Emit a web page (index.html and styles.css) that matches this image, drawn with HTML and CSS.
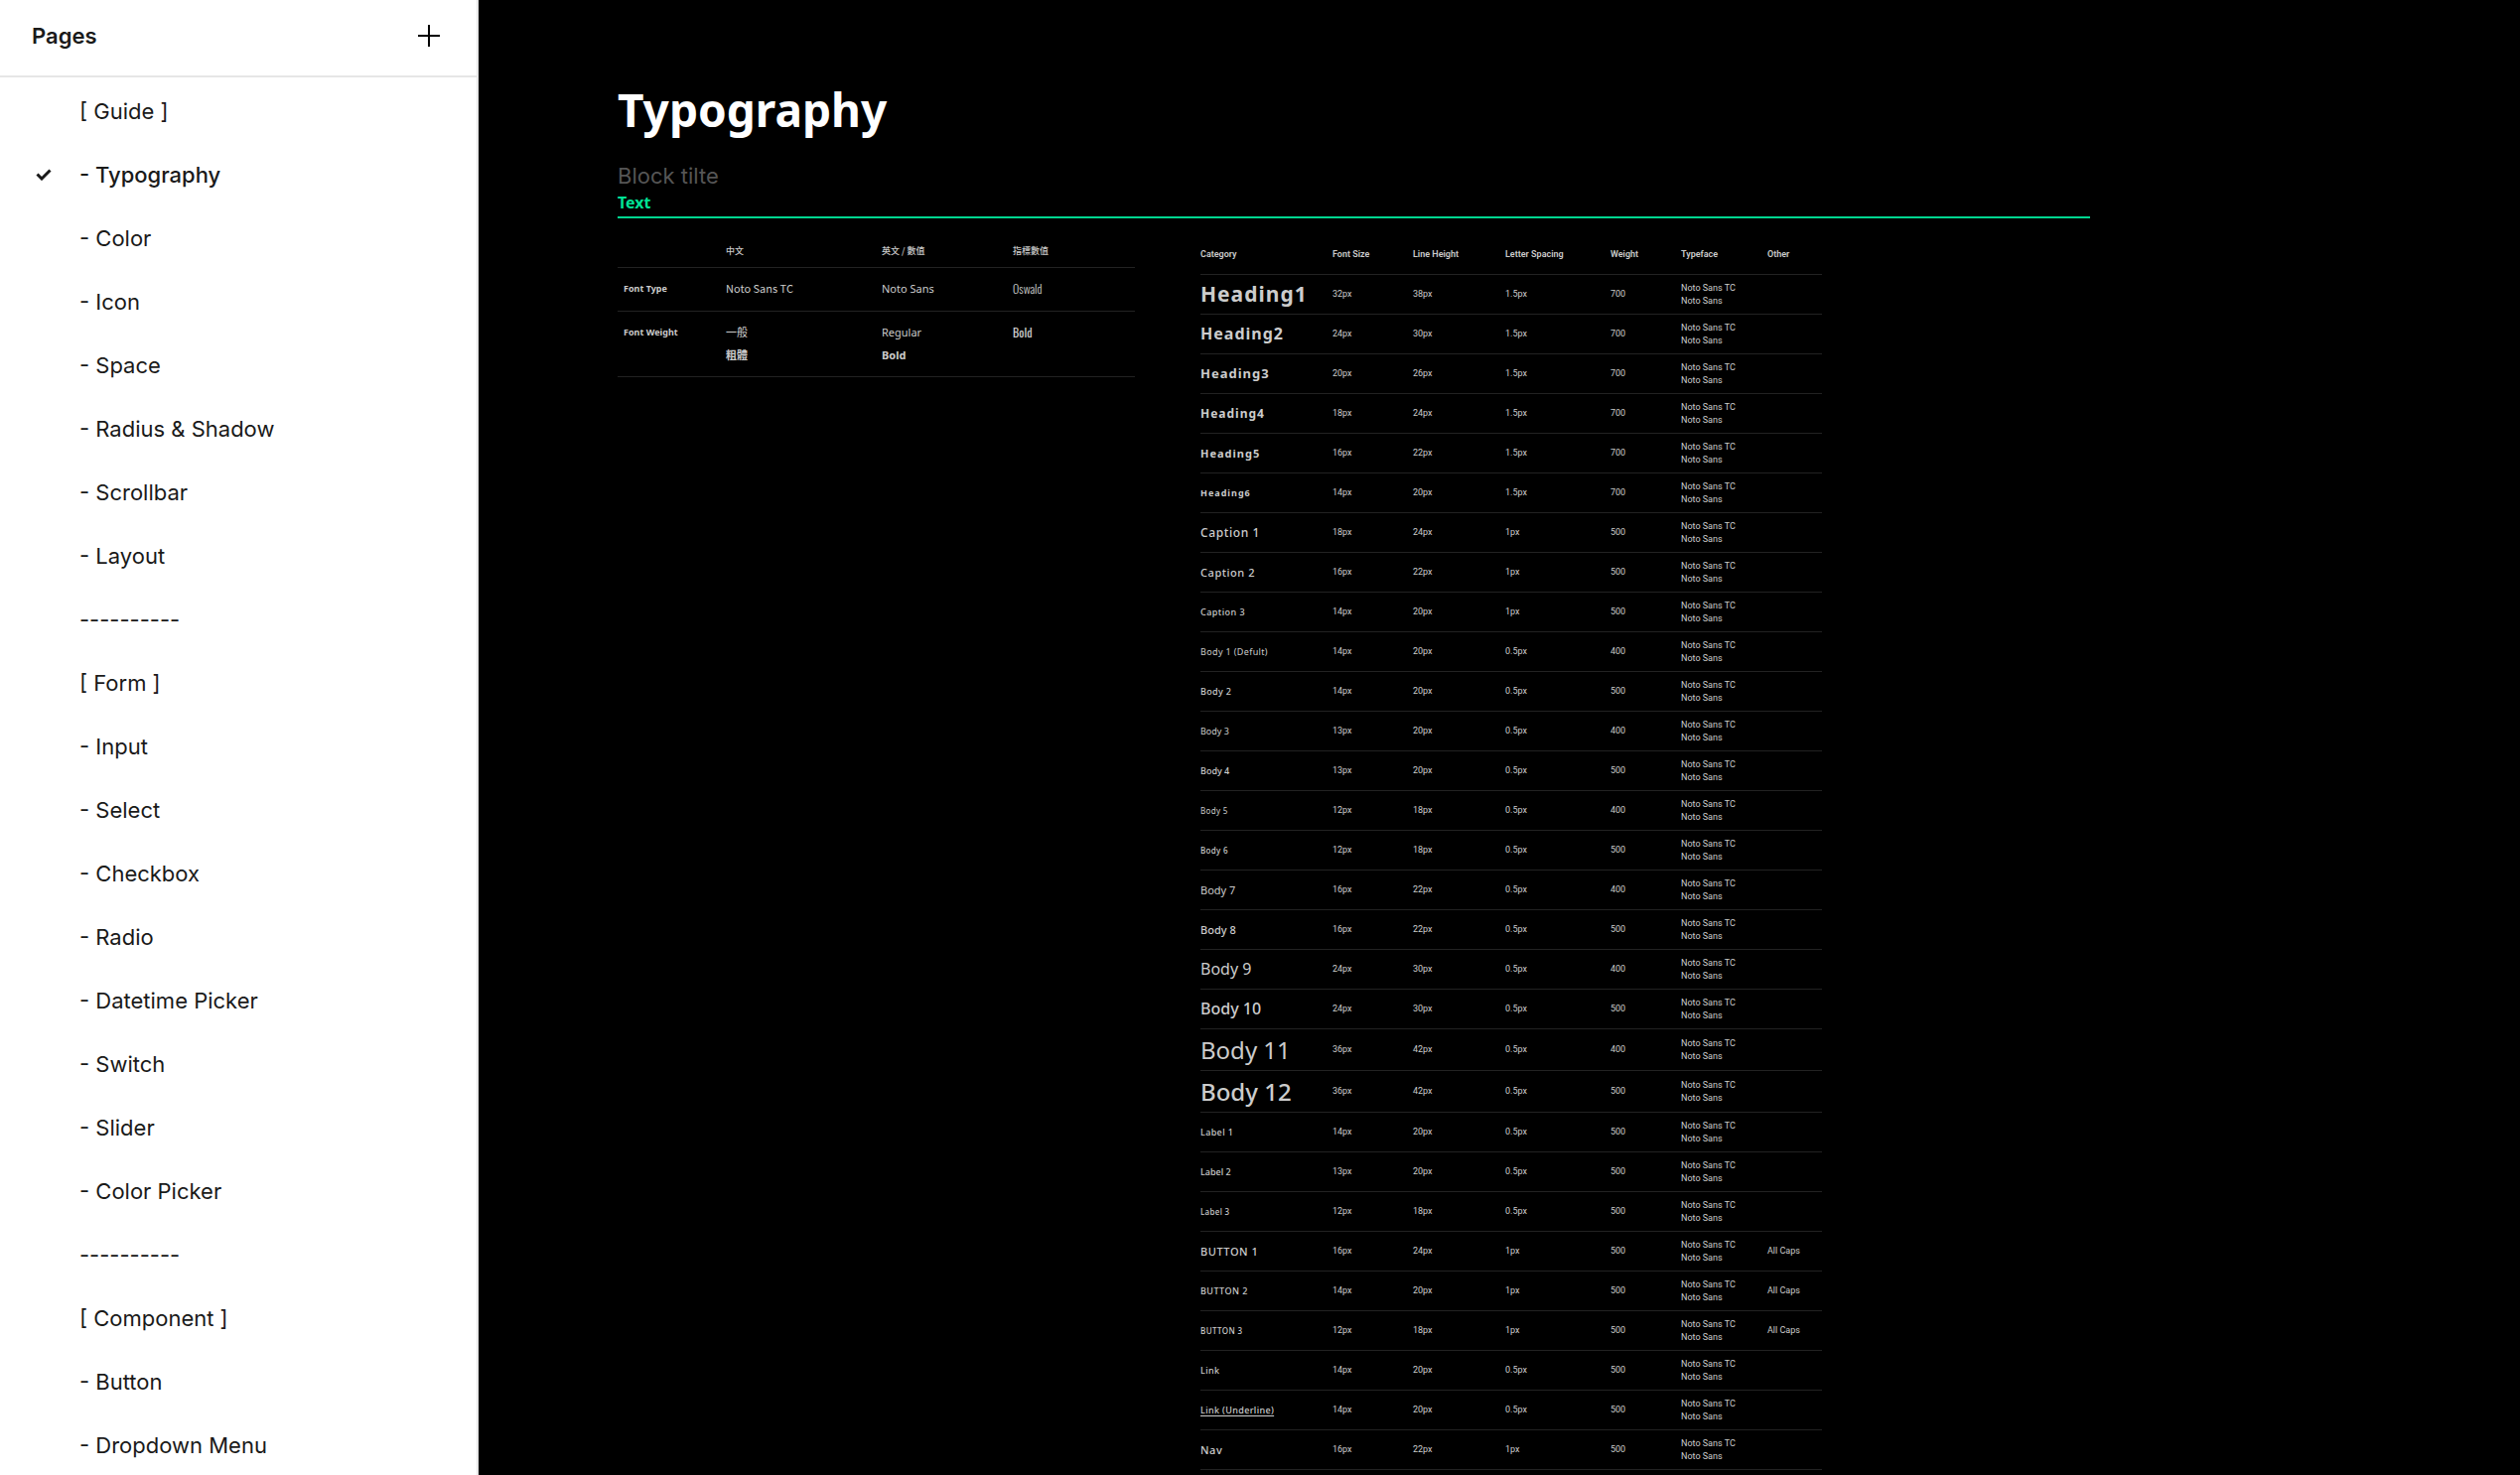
FILE: index.html
```html
<!DOCTYPE html>
<html lang="en">
<head>
<meta charset="utf-8">
<title>Typography</title>
<link rel="stylesheet" href="styles.css">
</head>
<body>
<aside class="sidebar">
  <header class="sidebar-head">
    <h2 class="sidebar-title">Pages</h2>
    <button class="add" type="button" aria-label="Add page"><svg width="22" height="22" viewBox="0 0 22 22"><path d="M11 0v22M0 11h22" stroke="currentColor" stroke-width="2"/></svg></button>
  </header>
  <nav>
    <ul class="pages">
      <li>[ Guide ]</li>
      <li class="current"><svg class="tick" width="16" height="12" viewBox="0 0 16 12"><path d="M1.500 5.500L6 10L14.500 1.500" fill="none" stroke="currentColor" stroke-width="3"/></svg><a href="#" aria-current="page">- Typography</a></li>
      <li><a href="#">- Color</a></li>
      <li><a href="#">- Icon</a></li>
      <li><a href="#">- Space</a></li>
      <li><a href="#">- Radius &amp; Shadow</a></li>
      <li><a href="#">- Scrollbar</a></li>
      <li><a href="#">- Layout</a></li>
      <li>----------</li>
      <li>[ Form ]</li>
      <li><a href="#">- Input</a></li>
      <li><a href="#">- Select</a></li>
      <li><a href="#">- Checkbox</a></li>
      <li><a href="#">- Radio</a></li>
      <li><a href="#">- Datetime Picker</a></li>
      <li><a href="#">- Switch</a></li>
      <li><a href="#">- Slider</a></li>
      <li><a href="#">- Color Picker</a></li>
      <li>----------</li>
      <li>[ Component ]</li>
      <li><a href="#">- Button</a></li>
      <li><a href="#">- Dropdown Menu</a></li>
    </ul>
  </nav>
</aside>
<main class="canvas">
  <h1 class="title">Typography</h1>
  <p class="block-title">Block tilte</p>
  <h2 class="section-title">Text</h2>
  <div class="tables">
    <table class="fonts">
      <colgroup><col class="f-label"><col class="f-zh"><col class="f-en"><col></colgroup>
      <thead><tr><td></td><th>中文</th><th>英文 / 數值</th><th>指標數值</th></tr></thead>
      <tbody>
        <tr><th>Font Type</th><td class="cjk">Noto Sans TC</td><td>Noto Sans</td><td class="narrow">Oswald</td></tr>
        <tr><th>Font Weight</th><td class="cjk">一般<br><b>粗體</b></td><td>Regular<br><b>Bold</b></td><td class="narrow"><b>Bold</b></td></tr>
      </tbody>
    </table>
    <table class="scale">
      <colgroup><col class="s-cat"><col class="s-size"><col class="s-line"><col class="s-spacing"><col class="s-weight"><col class="s-face"><col></colgroup>
      <thead><tr><th>Category</th><th>Font Size</th><th>Line Height</th><th>Letter Spacing</th><th>Weight</th><th>Typeface</th><th>Other</th></tr></thead>
      <tbody>
        <tr><td class="t32 bold">Heading1</td><td>32px</td><td>38px</td><td>1.5px</td><td>700</td><td>Noto Sans TC<br>Noto Sans</td><td></td></tr>
        <tr><td class="t24 bold">Heading2</td><td>24px</td><td>30px</td><td>1.5px</td><td>700</td><td>Noto Sans TC<br>Noto Sans</td><td></td></tr>
        <tr><td class="t20 bold">Heading3</td><td>20px</td><td>26px</td><td>1.5px</td><td>700</td><td>Noto Sans TC<br>Noto Sans</td><td></td></tr>
        <tr><td class="t18 bold">Heading4</td><td>18px</td><td>24px</td><td>1.5px</td><td>700</td><td>Noto Sans TC<br>Noto Sans</td><td></td></tr>
        <tr><td class="t16 bold">Heading5</td><td>16px</td><td>22px</td><td>1.5px</td><td>700</td><td>Noto Sans TC<br>Noto Sans</td><td></td></tr>
        <tr><td class="t14 bold">Heading6</td><td>14px</td><td>20px</td><td>1.5px</td><td>700</td><td>Noto Sans TC<br>Noto Sans</td><td></td></tr>
        <tr><td class="t18 medium wide">Caption 1</td><td>18px</td><td>24px</td><td>1px</td><td>500</td><td>Noto Sans TC<br>Noto Sans</td><td></td></tr>
        <tr><td class="t16 medium wide">Caption 2</td><td>16px</td><td>22px</td><td>1px</td><td>500</td><td>Noto Sans TC<br>Noto Sans</td><td></td></tr>
        <tr><td class="t14 medium wide">Caption 3</td><td>14px</td><td>20px</td><td>1px</td><td>500</td><td>Noto Sans TC<br>Noto Sans</td><td></td></tr>
        <tr><td class="t14">Body 1 (Defult)</td><td>14px</td><td>20px</td><td>0.5px</td><td>400</td><td>Noto Sans TC<br>Noto Sans</td><td></td></tr>
        <tr><td class="t14 medium">Body 2</td><td>14px</td><td>20px</td><td>0.5px</td><td>500</td><td>Noto Sans TC<br>Noto Sans</td><td></td></tr>
        <tr><td class="t13">Body 3</td><td>13px</td><td>20px</td><td>0.5px</td><td>400</td><td>Noto Sans TC<br>Noto Sans</td><td></td></tr>
        <tr><td class="t13 medium">Body 4</td><td>13px</td><td>20px</td><td>0.5px</td><td>500</td><td>Noto Sans TC<br>Noto Sans</td><td></td></tr>
        <tr><td class="t12">Body 5</td><td>12px</td><td>18px</td><td>0.5px</td><td>400</td><td>Noto Sans TC<br>Noto Sans</td><td></td></tr>
        <tr><td class="t12 medium">Body 6</td><td>12px</td><td>18px</td><td>0.5px</td><td>500</td><td>Noto Sans TC<br>Noto Sans</td><td></td></tr>
        <tr><td class="t16">Body 7</td><td>16px</td><td>22px</td><td>0.5px</td><td>400</td><td>Noto Sans TC<br>Noto Sans</td><td></td></tr>
        <tr><td class="t16 medium">Body 8</td><td>16px</td><td>22px</td><td>0.5px</td><td>500</td><td>Noto Sans TC<br>Noto Sans</td><td></td></tr>
        <tr><td class="t24">Body 9</td><td>24px</td><td>30px</td><td>0.5px</td><td>400</td><td>Noto Sans TC<br>Noto Sans</td><td></td></tr>
        <tr><td class="t24 medium">Body 10</td><td>24px</td><td>30px</td><td>0.5px</td><td>500</td><td>Noto Sans TC<br>Noto Sans</td><td></td></tr>
        <tr class="tall"><td class="t36">Body 11</td><td>36px</td><td>42px</td><td>0.5px</td><td>400</td><td>Noto Sans TC<br>Noto Sans</td><td></td></tr>
        <tr class="tall"><td class="t36 medium">Body 12</td><td>36px</td><td>42px</td><td>0.5px</td><td>500</td><td>Noto Sans TC<br>Noto Sans</td><td></td></tr>
        <tr><td class="t14 medium">Label 1</td><td>14px</td><td>20px</td><td>0.5px</td><td>500</td><td>Noto Sans TC<br>Noto Sans</td><td></td></tr>
        <tr><td class="t13 medium">Label 2</td><td>13px</td><td>20px</td><td>0.5px</td><td>500</td><td>Noto Sans TC<br>Noto Sans</td><td></td></tr>
        <tr><td class="t12 medium">Label 3</td><td>12px</td><td>18px</td><td>0.5px</td><td>500</td><td>Noto Sans TC<br>Noto Sans</td><td></td></tr>
        <tr><td class="t16 medium wide">BUTTON 1</td><td>16px</td><td>24px</td><td>1px</td><td>500</td><td>Noto Sans TC<br>Noto Sans</td><td>All Caps</td></tr>
        <tr><td class="t14 medium wide">BUTTON 2</td><td>14px</td><td>20px</td><td>1px</td><td>500</td><td>Noto Sans TC<br>Noto Sans</td><td>All Caps</td></tr>
        <tr><td class="t12 medium wide">BUTTON 3</td><td>12px</td><td>18px</td><td>1px</td><td>500</td><td>Noto Sans TC<br>Noto Sans</td><td>All Caps</td></tr>
        <tr><td class="t14 medium">Link</td><td>14px</td><td>20px</td><td>0.5px</td><td>500</td><td>Noto Sans TC<br>Noto Sans</td><td></td></tr>
        <tr><td class="t14 medium underline">Link (Underline)</td><td>14px</td><td>20px</td><td>0.5px</td><td>500</td><td>Noto Sans TC<br>Noto Sans</td><td></td></tr>
        <tr><td class="t16 medium wide">Nav</td><td>16px</td><td>22px</td><td>1px</td><td>500</td><td>Noto Sans TC<br>Noto Sans</td><td></td></tr>
      </tbody>
    </table>
  </div>
</main>
</body>
</html>
```
FILE: styles.css
```css
* { box-sizing: border-box; }
body { margin: 0; display: flex; height: 100vh; overflow: hidden; background: #000; }
h1, h2, p, ul { margin: 0; padding: 0; }

.sidebar {
  flex: 0 0 482px;
  background: #fff;
  border-right: 2px solid #e6e6e6;
  color: #1a1a1a;
  font: 22px/64px Inter, sans-serif;
}
.sidebar-head {
  display: flex;
  align-items: center;
  justify-content: space-between;
  height: 78px;
  padding: 0 37px 4px 32px;
  border-bottom: 2px solid #e6e6e6;
}
.sidebar-title { font-size: 22px; font-weight: 600; line-height: 32px; }
.add { display: flex; padding: 0; border: 0; background: none; color: #000; }
.pages { padding: 2px 0 0; list-style: none; }
.pages li { display: flex; align-items: center; height: 64px; padding-left: 80px; }
.pages a { color: inherit; text-decoration: none; }
.pages .current { padding-left: 36px; gap: 28px; font-weight: 500; }

.canvas {
  flex: 1;
  padding: 78px 0 0 140px;
  color: #ccc;
  font-family: "Noto Sans", "Noto Sans CJK TC", sans-serif;
}
.title { color: #fff; font-size: 46px; line-height: 64px; }
.block-title { margin-top: 19px; color: #555; font: 22px/32px Inter, sans-serif; }
.section-title {
  margin-right: 433px;
  padding-bottom: 3px;
  border-bottom: 2px solid #00d68f;
  color: #00e396;
  font-size: 16px;
  line-height: 22px;
}
.tables { display: flex; align-items: flex-start; gap: 66px; margin-top: 16px; }

table { border-collapse: collapse; table-layout: fixed; }
th, td { padding: 0; border-bottom: 1px solid #222; text-align: left; }
.fonts { width: 521px; font-size: 11px; line-height: 23px; }
.fonts th { font-size: 9px; }
.fonts td, .fonts tbody th { height: 44px; padding: 9px 0 10px; vertical-align: top; }
.fonts tbody th { padding-left: 6px; }
.fonts thead th, .fonts thead td { height: 33px; padding: 0; font-weight: 500; vertical-align: middle; }
.fonts thead th, .cjk { font-family: "Noto Sans CJK TC", sans-serif; }
.fonts .narrow { font-family: "Oswald", "Liberation Sans Narrow", "Roboto Condensed", Roboto, sans-serif; font-size: 12px; font-weight: 300; }
.f-label { width: 109px; }
.f-zh { width: 157px; }
.f-en { width: 132px; }

.scale { width: 626px; font-family: Roboto, sans-serif; font-size: 9px; line-height: 13px; }
.scale th { height: 40px; padding-top: 2px; font-weight: 600; }
.scale td { height: 40px; padding-top: 1px; }
.scale td:first-child { padding-top: 0; font-family: "Noto Sans", sans-serif; }
.scale .tall td { height: 42px; }
.s-cat { width: 133px; }
.s-size { width: 81px; }
.s-line { width: 93px; }
.s-spacing { width: 106px; }
.s-weight { width: 71px; }
.s-face { width: 87px; }
.t36 { font-size: 24px; }
.t32 { font-size: 21px; }
.t24 { font-size: 16px; }
.t20 { font-size: 13px; }
.t18 { font-size: 12px; }
.t16 { font-size: 11px; }
.t14, .t13 { font-size: 9px; }
.t12 { font-size: 8px; }
.t14, .t12 { letter-spacing: 0.04em; }
.medium { font-weight: 500; }
.bold { font-weight: 700; letter-spacing: 1px; }
.wide { letter-spacing: 0.05em; }
.underline { text-decoration: underline; text-underline-offset: 2px; }
```
